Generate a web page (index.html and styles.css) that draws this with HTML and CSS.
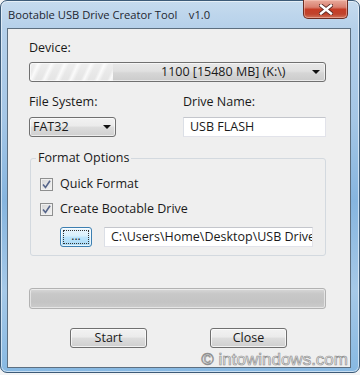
FILE: index.html
```html
<!DOCTYPE html>
<html>
<head>
<meta charset="utf-8">
<link rel="stylesheet" href="styles.css">
</head>
<body>
<div class="window">
  <div class="titlebar">
    <span class="title">Bootable USB Drive Creator Tool&nbsp;&nbsp;&nbsp;&nbsp;v1.0</span>
    <div class="close-btn">
      <svg width="14" height="11" viewBox="0 0 14 11">
        <path d="M2 1.5 L12 9.5 M12 1.5 L2 9.5" stroke="#5a2a24" stroke-width="4.2" stroke-linecap="square" fill="none"/>
        <path d="M2 1.5 L12 9.5 M12 1.5 L2 9.5" stroke="#ffffff" stroke-width="2.4" stroke-linecap="square" fill="none"/>
      </svg>
    </div>
  </div>
  <div class="client">
    <div class="label">Device:</div>
    <div class="combo combo-device">
      <span class="combo-text">1100 [15480 MB] (K:\)</span>
      <span class="arrow"></span>
    </div>
    <div class="row2">
      <div class="col">
        <div class="label">File System:</div>
        <div class="combo combo-fs">
          <span class="combo-text">FAT32</span>
          <span class="arrow"></span>
        </div>
      </div>
      <div class="col">
        <div class="label">Drive Name:</div>
        <div class="textbox">USB FLASH</div>
      </div>
    </div>
    <fieldset class="group">
      <legend>Format Options</legend>
      <div class="check-row">
        <span class="checkbox"><svg width="9" height="9" viewBox="0 0 9 9"><path d="M1 4.5 L3.5 7.5 L8 0.8" stroke="#56658a" stroke-width="1.6" fill="none"/></svg></span>
        <span>Quick Format</span>
      </div>
      <div class="check-row second">
        <span class="checkbox"><svg width="9" height="9" viewBox="0 0 9 9"><path d="M1 4.5 L3.5 7.5 L8 0.8" stroke="#56658a" stroke-width="1.6" fill="none"/></svg></span>
        <span>Create Bootable Drive</span>
      </div>
      <div class="path-row">
        <div class="browse-btn"><span class="focus">...</span></div>
        <div class="textbox path">C:\Users\Home\Desktop\USB Drive</div>
      </div>
    </fieldset>
    <div class="progress"></div>
    <div class="buttons">
      <div class="btn">Start</div>
      <div class="btn">Close</div>
    </div>
  </div>
  <div class="watermark">© intowindows.com</div>
</div>
</body>
</html>
```

FILE: styles.css
```css
* { box-sizing: border-box; }
html, body { margin: 0; padding: 0; }
body {
  width: 360px;
  height: 375px;
  background: #f3f4f5;
  font-family: "Open Sans", "Noto Sans", sans-serif;
  font-size: 12.5px;
  color: #1a1a1a;
  overflow: hidden;
}
.window {
  position: relative;
  width: 360px;
  height: 373px;
  display: flex;
  flex-direction: column;
  border: 1px solid #3d5b78;
  border-radius: 7px;
  background: linear-gradient(180deg, #c6dbee 0px, #b5d0ea 28px, #a4c6e6 120px, #86b5df 200px, #a6c9e8 290px, #86b8e2 373px);
  box-shadow: inset 0 0 0 1px rgba(255,255,255,0.55);
}
.titlebar {
  height: 27px;
  display: flex;
  align-items: flex-start;
  justify-content: space-between;
  padding: 0 11px 0 7px;
}
.title {
  font-size: 11.2px;
  line-height: 16px;
  margin-top: 6px;
  color: #1e2630;
  white-space: pre;
}
.close-btn {
  width: 45px;
  height: 19px;
  margin-top: -1px;
  border: 1px solid #6b2c22;
  border-top: none;
  border-radius: 0 0 5px 5px;
  background: linear-gradient(180deg, #e9ab9c 0%, #d98070 40%, #c63d26 52%, #c0432c 78%, #cf735b 100%);
  box-shadow: inset 0 0 0 1px rgba(255,210,200,0.45);
  display: flex;
  align-items: center;
  justify-content: center;
}
.client {
  flex: 1;
  margin: 0 8px 4px 6px;
  border: 1px solid #5d6f80;
  background: #efefef;
  padding: 11px 24px 0 21px;
  display: flex;
  flex-direction: column;
}
.label {
  line-height: 16px;
  height: 16px;
}
.combo {
  height: 20px;
  border: 1px solid #707070;
  border-radius: 3px;
  display: flex;
  align-items: center;
  position: relative;
  background: linear-gradient(180deg, #f2f2f2 0%, #ebebeb 45%, #dddddd 50%, #cfcfcf 100%);
  box-shadow: inset 0 0 0 1px rgba(255,255,255,0.6);
}
.combo-device {
  margin-top: 6px;
  padding-left: 131px;
  background:
    repeating-linear-gradient(115deg, rgba(255,255,255,0) 0px, rgba(255,255,255,0) 5px, rgba(255,255,255,0.8) 8px, rgba(255,255,255,0) 12px) 0 0 / 83px 100% no-repeat,
    linear-gradient(180deg, #eeeeee 0px, #e4e4e4 100%) 0 0 / 83px 100% no-repeat,
    linear-gradient(180deg, #e8e8e8 0%, #e0e0e0 45%, #d6d6d6 55%, #cbcbcb 100%);
}
.combo-text {
  line-height: 16px;
  white-space: nowrap;
}
.arrow {
  position: absolute;
  right: 5px;
  top: 7px;
  width: 0;
  height: 0;
  border-left: 4px solid transparent;
  border-right: 4px solid transparent;
  border-top: 4px solid #111;
}
.row2 {
  margin-top: 12px;
  display: grid;
  grid-template-columns: 154px 143px;
}
.row2 .combo, .row2 .textbox { margin-top: 7px; }
.combo-fs {
  width: 87px;
  padding-left: 3px;
}
.combo-fs .arrow { right: 4px; }
.textbox {
  height: 20px;
  background: #ffffff;
  border: 1px solid #e2e3ea;
  border-top-color: #c4c6cc;
  border-left-color: #dbdfe6;
  line-height: 18px;
  padding-left: 6px;
  white-space: nowrap;
  overflow: hidden;
}
.group {
  margin: 13px 0 0 1px;
  width: 296px;
  border: 1px solid #d3d9df;
  border-radius: 3px;
  padding: 0 12px 8px 9px;
  min-width: 0;
}
.group legend {
  padding: 0 2px;
  margin-left: -4px;
  line-height: 16px;
}
.check-row {
  display: flex;
  align-items: center;
  gap: 7px;
  height: 16px;
  line-height: 16px;
  margin-top: 10px;
}
.check-row.second { margin-top: 9px; }
.checkbox {
  width: 13px;
  height: 13px;
  border: 1px solid #8e8f8f;
  background: linear-gradient(135deg, #d6d6d6 0%, #f4f4f4 100%);
  box-shadow: inset 0 0 0 1px #f0f0f0;
  display: flex;
  align-items: center;
  justify-content: center;
}
.path-row {
  display: flex;
  gap: 12px;
  margin-top: 10px;
  padding-left: 20px;
}
.browse-btn {
  width: 32px;
  height: 20px;
  border: 1px solid #3c7fb1;
  border-radius: 3px;
  background: linear-gradient(180deg, #eaf6fd 0%, #d9f0fc 45%, #bee6fd 50%, #a7d9f5 100%);
  box-shadow: inset 0 0 0 1px rgba(255,255,255,0.7);
  padding: 2px;
}
.browse-btn .focus {
  display: block;
  height: 100%;
  border: 1px dotted #333;
  line-height: 10px;
  text-align: center;
  font-size: 12px;
}
.textbox.path {
  width: 209px;
}
.progress {
  margin-top: 32px;
  height: 21px;
  border: 1px solid #b2b2b2;
  border-radius: 3px;
  background: linear-gradient(180deg, #d8d8d8 0%, #c8c8c8 25%, #c4c4c4 70%, #cccccc 100%);
  box-shadow: inset 0 0 0 1px rgba(255,255,255,0.5);
}
.buttons {
  margin-top: 19px;
  display: flex;
  gap: 63px;
  padding-left: 41px;
}
.btn {
  width: 77px;
  height: 20px;
  border: 1px solid #707070;
  border-radius: 3px;
  background: linear-gradient(180deg, #f2f2f2 0%, #ebebeb 45%, #dddddd 50%, #cfcfcf 100%);
  box-shadow: inset 0 0 0 1px rgba(255,255,255,0.7);
  text-align: center;
  line-height: 18px;
}
.watermark {
  position: absolute;
  right: 11px;
  bottom: 2px;
  font-family: "Liberation Sans", sans-serif;
  font-size: 17px;
  line-height: 20px;
  color: rgba(248,248,248,0.85);
  -webkit-text-stroke: 0.7px #909090;
}
```
